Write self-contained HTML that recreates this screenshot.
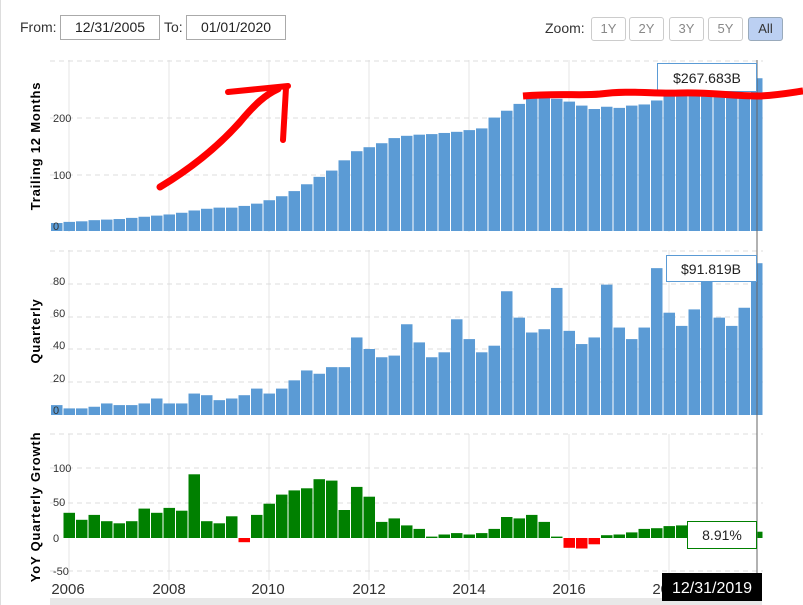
<!DOCTYPE html><html><head><meta charset="utf-8"><style>
body{margin:0;background:#fff;width:803px;height:605px;overflow:hidden;font-family:"Liberation Sans",sans-serif;position:relative}
.t{position:absolute;font-size:14px;color:#333}
.box{position:absolute;border:1px solid #aaa;font-size:14px;color:#222;text-align:center;line-height:23px;height:23px;background:#fff}
.btn{position:absolute;top:17px;height:22px;width:33px;border:1px solid #ccc;border-radius:3px;font-size:13px;color:#888;text-align:center;line-height:22px;background:#fff}
</style></head><body>
<div style="position:absolute;left:0;top:0;width:1px;height:605px;background:#ddd"></div>
<div class="t" style="left:20px;top:19px">From:</div>
<div class="box" style="left:60px;top:15px;width:98px">12/31/2005</div>
<div class="t" style="left:164px;top:19px">To:</div>
<div class="box" style="left:186px;top:15px;width:98px">01/01/2020</div>
<div class="t" style="left:545px;top:20px">Zoom:</div>
<div class="btn" style="left:591px">1Y</div>
<div class="btn" style="left:629px">2Y</div>
<div class="btn" style="left:669px">3Y</div>
<div class="btn" style="left:708px">5Y</div>
<div class="btn" style="left:748px;background:#bcd0f2;border-color:#9ab;color:#333">All</div>
<svg id="s" width="803" height="605" style="position:absolute;left:0;top:0" font-family="Liberation Sans, sans-serif"></svg>
<script>
var s=document.getElementById('s'),h='';
function L(x1,y1,x2,y2,c,d,w){h+='<line x1="'+x1+'" y1="'+y1+'" x2="'+x2+'" y2="'+y2+'" stroke="'+c+'" stroke-width="'+(w||1)+'"'+(d?' stroke-dasharray="5,4"':'')+'/>';}
function T(x,y,t,sz,c,ex){h+='<text x="'+x+'" y="'+y+'" font-size="'+sz+'" fill="'+c+'" '+(ex||'')+'>'+t+'</text>';}
[69,169,269,369,469,569,669].forEach(function(x){L(x,60,x,232,'#e4e4e4');L(x,250,x,415,'#e4e4e4');L(x,434,x,580,'#e4e4e4');});
[61,118,175].forEach(function(y){L(50,y,763,y,'#ddd',1)});
[251,284,317,349,382].forEach(function(y){L(50,y,763,y,'#ddd',1)});
[434,468,503,571].forEach(function(y){L(50,y,763,y,'#ddd',1)});
var ttm=[14,16,17,19,20,21,23,25,27,29,32,36,39,41,41,44,48,54,61,70,82,95,106,124,140,147,154,163,167,169,170,172,174,177,180,199,211,223,233,238,232,227,220,214,218,216,220,222,229,238,243,242,238,236,235,235,268];
var q=[6,4,4,5,7,6,6,7,10,7,7,13,12,9,10,12,16,13,16,21,27,25,29,29,47,40,35,36,55,44,35,38,58,46,38,42,75,59,50,52,77,51,43,47,79,53,46,53,89,62,54,64,85,59,54,65,92];
var g=[36,26,33,24,21,24,42,36,43,39,91,24,21,31,-6,33,49,62,68,71,84,82,40,73,59,23,28,18,13,2,5,7,5,7,13,30,28,33,23,2,-14,-15,-9,4,5,8,13,14,17,18,19,-5,-5,3,5,9];
function R(x,y,w,hh,c){h+='<rect x="'+x+'" y="'+y+'" width="'+w+'" height="'+hh+'" fill="'+c+'"/>';}
ttm.forEach(function(v,i){var x=51+12.5*i,hh=v*0.57;R(x,231-hh,11.5,hh,'#5b9bd5');});
q.forEach(function(v,i){var x=51+12.5*i,hh=v*1.65;R(x,415-hh,11.5,hh,'#5b9bd5');});
g.forEach(function(v,i){var x=63.5+12.5*i,hh=Math.abs(v)*0.7;R(x,v>0?538-hh:538,11.5,hh,v>0?'#008000':'#ff0000');});
L(757,60,757,580,'#666');
T(53,230,'0',11,'#333');T(53,179,'100',11,'#333');T(53,122,'200',11,'#333');
T(53,414,'0',11,'#333');T(53,382,'20',11,'#333');T(53,349,'40',11,'#333');T(53,317,'60',11,'#333');T(53,285,'80',11,'#333');
T(53,542,'0',11,'#333');T(53,506,'50',11,'#333');T(53,472,'100',11,'#333');T(53,575,'-50',11,'#333');
var ax='font-weight="bold" text-anchor="middle" letter-spacing="0.8"';
T(40,146,'Trailing 12 Months',13,'#000',ax+' transform="rotate(-90 40 146)"');
T(40,331,'Quarterly',13,'#000',ax+' transform="rotate(-90 40 331)"');
T(40,507,'YoY Quarterly Growth',13,'#000',ax+' transform="rotate(-90 40 507)"');
[['2006',68],['2008',169],['2010',268],['2012',369],['2014',469],['2016',569],['2018',669]].forEach(function(a){T(a[1],594,a[0],15,'#333','text-anchor="middle"');});
R(50,598,712,7,'#e8e8e8');
h+='<rect x="657.5" y="63.5" width="99" height="28" fill="#fff" stroke="#5b9bd5"/>';T(707,83,'$267.683B',14,'#222','text-anchor="middle"');
h+='<rect x="666.5" y="255.5" width="90" height="26" fill="#fff" stroke="#5b9bd5"/>';T(711,274,'$91.819B',14,'#222','text-anchor="middle"');
h+='<rect x="687.5" y="521.5" width="69" height="27" fill="#fff" stroke="#008000"/>';T(722,540,'8.91%',14,'#222','text-anchor="middle"');
R(662,573,100,28,'#000');T(712,593,'12/31/2019',16,'#fff','text-anchor="middle"');
h+='<path d="M160 187 C185 172 215 150 240 122 C255 104 265 95 278 89" fill="none" stroke="#f00" stroke-width="7" stroke-linecap="round"/>';
h+='<path d="M228 92 L288 86 M286 88 L283 140" fill="none" stroke="#f00" stroke-width="6" stroke-linecap="round"/>';
h+='<path d="M523 96 C560 93 580 96 600 94 C630 90 650 94 680 93 C710 92 730 96 760 96 C780 95 795 92 803 91" fill="none" stroke="#f00" stroke-width="7"/>';
s.innerHTML=h;
</script>
</body></html>
